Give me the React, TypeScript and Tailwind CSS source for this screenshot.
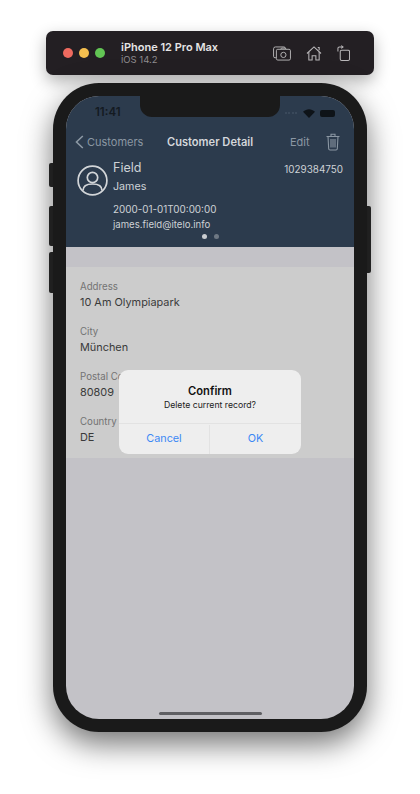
import React from 'react';

const rows = [
  { label: 'Address', value: '10 Am Olympiapark' },
  { label: 'City', value: 'München' },
  { label: 'Postal Code', value: '80809' },
  { label: 'Country', value: 'DE' },
];

const TitleBar = () => (
  <div className="flex items-center w-[328px] h-[44px] rounded-[7px] bg-[#231f23] pl-[17px] pr-[24px] shadow-[0_6px_16px_rgba(0,0,0,0.3)] shrink-0">
    <div className="flex items-center gap-[6px]">
      <div className="w-[10px] h-[10px] rounded-full bg-[#ee6a5f]" />
      <div className="w-[10px] h-[10px] rounded-full bg-[#f5bf4f]" />
      <div className="w-[10px] h-[10px] rounded-full bg-[#62c554]" />
    </div>
    <div className="ml-[16px] flex flex-col">
      <span className="text-[11px] leading-[14px] font-semibold text-[#e6e5e6]">iPhone 12 Pro Max</span>
      <span className="text-[9.5px] leading-[12px] text-[#8f8c8f]">iOS 14.2</span>
    </div>
    <div className="ml-auto flex items-center gap-[15px] text-[#b9b7b9]">
      <svg width="18" height="15" viewBox="0 0 19 16" fill="none" stroke="currentColor" strokeWidth="1">
        <path d="M3 12.5H2a1.5 1.5 0 0 1-1.5-1.5V3A2 2 0 0 1 2.500 1h9A1.500 1.500 0 0 1 13 2.500" />
        <rect x="3.500" y="3.500" width="15" height="11.500" rx="1.500" />
        <circle cx="11" cy="9.500" r="2.800" />
        <path d="M8 3.500l1-1.300h4l1 1.300" />
      </svg>
      <svg width="16" height="15" viewBox="0 0 17 16" fill="none" stroke="currentColor" strokeWidth="1.100">
        <path d="M1 8l7.500-7L16 8" />
        <path d="M3 6.500V15h3.500v-4.500h4V15H14V6.500" />
        <path d="M12.500 1.500h1.500v3" />
      </svg>
      <svg width="13" height="16" viewBox="0 0 14 17" fill="none" stroke="currentColor" strokeWidth="1.100">
        <rect x="3.500" y="5.500" width="10" height="11" rx="1.500" />
        <path d="M1 7V3.500a1.500 1.500 0 0 1 1.500-1.500H6" />
        <path d="M4.500 0.500L6.500 2 4.500 3.500" />
      </svg>
    </div>
  </div>
);

const NavBar = () => (
  <div className="flex items-center h-[20px] mt-[9px]">
    <svg className="ml-[9px] shrink-0" width="9" height="14" viewBox="0 0 9 14" fill="none" stroke="#8b97a3" strokeWidth="1.600">
      <path d="M7.800 1L1.500 7l6.300 6" />
    </svg>
    <span className="ml-[3px] w-[56px] whitespace-nowrap text-[11px] text-[#8b97a3]">Customers</span>
    <span className="ml-[24px] w-[86px] whitespace-nowrap text-center text-[11.100px] font-semibold text-[#d4d7db]">Customer Detail</span>
    <span className="ml-[37px] w-[20px] text-[11px] text-[#8b97a3]">Edit</span>
    <svg className="ml-[16px] shrink-0" width="14" height="18" viewBox="0 0 14 18" fill="none" stroke="#8b97a3" strokeWidth="1.100">
      <path d="M0.500 3.500h13" />
      <path d="M5 3.500V1.200h4v2.300" />
      <path d="M2 3.500l0.700 12.300a1.300 1.300 0 0 0 1.300 1.200h6a1.300 1.300 0 0 0 1.300-1.200L12 3.500" />
      <path d="M5 6v8.500M7 6v8.500M9 6v8.500" />
    </svg>
  </div>
);

const Header = () => (
  <div className="h-[151px] bg-[#2c3b4d] flex flex-col shrink-0">
    <div className="flex items-center justify-between h-[27px] pl-[29px] pr-[19px] pt-[7px]">
      <span className="text-[11.500px] font-semibold text-[#141a21]">11:41</span>
      <div className="flex items-center gap-[5px]">
        <div className="flex gap-[1.500px] mr-[1px]">
          {[0, 1, 2, 3].map((i) => (
            <div key={i} className="w-[2px] h-[2px] rounded-full bg-[#3f4f60]" />
          ))}
        </div>
        <svg width="12" height="9" viewBox="0 0 12 9" fill="#0e1318">
          <path d="M6 9L0 2.700C3.500-0.700 8.500-0.700 12 2.700z" />
        </svg>
        <div className="w-[15px] h-[7px] rounded-[2px] bg-[#0e1318]" />
      </div>
    </div>
    <NavBar />
    <div className="flex mt-[6px] pl-[11px] pr-[11px]">
      <svg className="mt-[7px] shrink-0" width="31" height="31" viewBox="0 0 31 31" fill="none" stroke="#d2d5d8" strokeWidth="1.700">
        <circle cx="15.500" cy="15.500" r="14.400" />
        <circle cx="15.500" cy="12.500" r="5.200" />
        <path d="M6 25.500c0-4.500 4-6.500 9.500-6.500s9.500 2 9.500 6.500" />
      </svg>
      <div className="ml-[5px] flex flex-col flex-1">
        <div className="flex items-start justify-between">
          <span className="text-[12.500px] leading-[18px] mt-[1px] text-[#ced2d6]">Field</span>
          <span className="text-[9.900px] leading-[16px] mt-[3px] text-[#ced2d6]">1029384750</span>
        </div>
        <span className="text-[10.700px] leading-[16px] mt-[2px] text-[#ced2d6]">James</span>
        <span className="text-[9.900px] leading-[14px] mt-[7px] text-[#ced2d6]">2000-01-01T00:00:00</span>
        <span className="text-[9.600px] leading-[14px] mt-[2px] text-[#ced2d6]">james.field@itelo.info</span>
      </div>
    </div>
    <div className="flex justify-center gap-[7px] mt-[2px]">
      <div className="w-[5px] h-[5px] rounded-full bg-[#c9ccd0]" />
      <div className="w-[5px] h-[5px] rounded-full bg-[#6e7883]" />
    </div>
  </div>
);

const Dialog = () => (
  <div className="absolute left-[53px] top-[274px] w-[182px] h-[84px] rounded-[9px] bg-[#eeeeee] flex flex-col">
    <div className="h-[54px] flex flex-col items-center border-b border-[#e2e2e2]">
      <span className="mt-[13px] text-[11.200px] leading-[16px] font-semibold text-[#111111]">Confirm</span>
      <span className="text-[8.700px] leading-[13px] text-[#222222]">Delete current record?</span>
    </div>
    <div className="flex flex-1 pt-px">
      <div className="w-[91px] flex items-center justify-center border-r border-[#e2e2e2] text-[10.800px] text-[#3b88f5]">Cancel</div>
      <div className="flex-1 flex items-center justify-center text-[10.800px] text-[#3b88f5]">OK</div>
    </div>
  </div>
);

export default function App() {
  return (
    <div
      className="w-[420px] h-[794px] bg-white flex flex-col items-center pt-[31px] overflow-hidden"
      style={{ fontFamily: 'Inter, "Noto Sans", sans-serif' }}
    >
      <TitleBar />
      <div className="relative mt-[8px] w-[314px] h-[649px] shrink-0">
        <div className="absolute left-[-4px] top-[80px] w-[5px] h-[24px] rounded-l-[2px] bg-[#2b2b2b]" />
        <div className="absolute left-[-4px] top-[123px] w-[5px] h-[40px] rounded-l-[2px] bg-[#2b2b2b]" />
        <div className="absolute left-[-4px] top-[169px] w-[5px] h-[41px] rounded-l-[2px] bg-[#2b2b2b]" />
        <div className="absolute right-[-4px] top-[123px] w-[5px] h-[67px] rounded-r-[2px] bg-[#2b2b2b]" />
        <div className="relative w-full h-full rounded-[46px] bg-[#1a1a1a] p-[13px] shadow-[0_12px_30px_rgba(0,0,0,0.55)]">
          <div className="relative w-full h-full rounded-[33px] overflow-hidden bg-[#c3c2c7] flex flex-col">
            <div className="absolute left-[74px] top-0 w-[140px] h-[21px] rounded-b-[12px] bg-[#1a1a1a]" />
            <Header />
            <div className="mt-[20px] h-[191px] bg-[#cccccc] pl-[14px] pt-[13px] flex flex-col gap-[15px] shrink-0">
              {rows.map((row) => (
                <div key={row.label} className="flex flex-col h-[30px]">
                  <span className="text-[9.700px] leading-[14px] text-[#737373]">{row.label}</span>
                  <span className="text-[10.900px] leading-[16px] text-[#3a3a3a]">{row.value}</span>
                </div>
              ))}
            </div>
            <Dialog />
            <div className="absolute left-[93px] bottom-[4px] w-[103px] h-[3px] rounded-full bg-[#5f5f63]" />
          </div>
        </div>
      </div>
    </div>
  );
}
